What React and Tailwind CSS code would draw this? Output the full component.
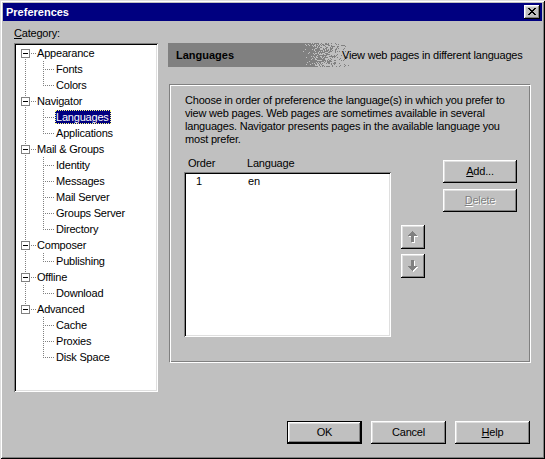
import React from "react";

const BTN =
  "shadow-[inset_-1px_-1px_0_#000,inset_1px_1px_0_#fff,inset_-2px_-2px_0_#808080,inset_2px_2px_0_#dfdfdf]";
const SUNKEN =
  "shadow-[inset_1px_1px_0_#808080,inset_-1px_-1px_0_#fff,inset_2px_2px_0_#000,inset_-2px_-2px_0_#dfdfdf]";

const tree = [
  { label: "Appearance", children: ["Fonts", "Colors"] },
  { label: "Navigator", children: ["Languages", "Applications"] },
  {
    label: "Mail & Groups",
    children: ["Identity", "Messages", "Mail Server", "Groups Server", "Directory"],
  },
  { label: "Composer", children: ["Publishing"] },
  { label: "Offline", children: ["Download"] },
  { label: "Advanced", children: ["Cache", "Proxies", "Disk Space"] },
];

function makeDither(w, h) {
  let seed = 987654;
  const rnd = () => {
    seed = (seed * 1103515245 + 12345) & 0x7fffffff;
    return seed / 0x7fffffff;
  };
  let d = "";
  for (let y = 0; y < h; y++) {
    for (let x = 0; x < w; x++) {
      const t = (x + 0.5) / w;
      if (rnd() > t) d += `M${x} ${y}h1v1h-1z`;
    }
  }
  return d;
}
const DITHER = makeDither(47, 24);

function rowsPath(rows, ox, oy) {
  let d = "";
  rows.forEach(([a, b], y) => {
    d += `M${a + ox} ${y + oy}h${b - a + 1}v1h-${b - a + 1}z`;
  });
  return d;
}
const UP_ROWS = [
  [4, 4],
  [3, 5],
  [2, 6],
  [1, 7],
  [0, 8],
  [3, 5],
  [3, 5],
  [3, 5],
  [3, 5],
  [3, 5],
  [3, 5],
];
const DOWN_ROWS = [...UP_ROWS].reverse();

const X_ROWS = [
  [0, 1, 6, 7],
  [1, 2, 5, 6],
  [2, 5],
  [3, 4],
  [2, 5],
  [1, 2, 5, 6],
  [0, 1, 6, 7],
];
function xPath(ox, oy) {
  let d = "";
  X_ROWS.forEach((r, y) => {
    for (let i = 0; i < r.length; i += 2) {
      const a = r[i],
        b = r[i + 1];
      d += `M${a + ox} ${y + oy}h${b - a + 1}v1h-${b - a + 1}z`;
    }
  });
  return d;
}

function Dots({ x1, y1, x2, y2 }) {
  return (
    <line
      x1={x1}
      y1={y1}
      x2={x2}
      y2={y2}
      stroke="#808080"
      strokeWidth="1"
      strokeDasharray="1 1"
    />
  );
}

function RootRow({ label, first, last }) {
  return (
    <div className="flex h-[16px] items-center">
      <svg width="20" height="16" className="shrink-0" shapeRendering="crispEdges">
        {!first && <Dots x1="9.5" y1="0" x2="9.5" y2="4" />}
        {!last && <Dots x1="9.5" y1="14" x2="9.5" y2="16" />}
        <rect x="5.5" y="4.5" width="8" height="8" fill="#fff" stroke="#808080" />
        <line x1="7" y1="8.5" x2="12" y2="8.5" stroke="#000" />
        <Dots x1="15" y1="8.5" x2="20" y2="8.5" />
      </svg>
      <span className="border border-transparent leading-[12px] whitespace-nowrap">
        {label}
      </span>
    </div>
  );
}

function ChildRow({ label, parentLast, lastChild, selected }) {
  return (
    <div className="flex h-[16px] items-center">
      <svg width="39" height="16" className="shrink-0" shapeRendering="crispEdges">
        {!parentLast && <Dots x1="9.5" y1="0" x2="9.5" y2="16" />}
        <Dots x1="27.5" y1="0" x2="27.5" y2={lastChild ? "9" : "16"} />
        <Dots x1="29" y1="8.5" x2="38" y2="8.5" />
      </svg>
      <span
        className={
          selected
            ? "border border-dotted border-[#ffff80] bg-[#000080] text-white pr-[1px] leading-[12px] whitespace-nowrap"
            : "border border-transparent pr-[1px] leading-[12px] whitespace-nowrap"
        }
      >
        {label}
      </span>
    </div>
  );
}

function Button({ children, className = "", isDefault = false, disabled = false }) {
  return (
    <div
      className={`flex items-center justify-center bg-[#c0c0c0] ${BTN} ${
        isDefault ? "border border-black" : ""
      } ${
        disabled ? "text-[#808080] [text-shadow:1px_1px_0_#fff]" : "text-black"
      } ${className}`}
    >
      {children}
    </div>
  );
}

function Arrow({ rows }) {
  return (
    <svg width="10" height="12" shapeRendering="crispEdges">
      <path d={rowsPath(rows, 1, 1)} fill="#fff" />
      <path d={rowsPath(rows, 0, 0)} fill="#808080" />
    </svg>
  );
}

export default function App() {
  return (
    <div
      className="w-[545px] h-[459px] bg-[#c0c0c0] p-[3px] flex flex-col font-['Liberation_Sans',Arial,sans-serif] text-[11px] tracking-[-0.2px] text-black shadow-[inset_1px_1px_0_#dfdfdf,inset_-1px_-1px_0_#000,inset_2px_2px_0_#fff,inset_-2px_-2px_0_#808080] overflow-hidden"
    >
      {/* Title bar */}
      <div className="h-[18px] shrink-0 bg-[#000080] flex items-center justify-between pl-[3px] pr-[2px]">
        <span className="font-bold text-white text-[11px] tracking-normal leading-none">
          Preferences
        </span>
        <div className={`w-[16px] h-[14px] bg-[#c0c0c0] ${BTN} flex`}>
          <svg width="16" height="14" shapeRendering="crispEdges">
            <path d={xPath(4, 3)} fill="#000" />
          </svg>
        </div>
      </div>

      {/* Body */}
      <div className="flex pl-[11px] pt-[6px]">
        <div className="flex flex-col w-[144px] shrink-0">
          <div className="h-[13px] leading-[13px] mb-[3px]">
            <u>C</u>ategory:
          </div>
          <div className={`h-[349px] bg-white ${SUNKEN} pt-[2px] pl-[2px]`}>
            {tree.map((node, i) => {
              const first = i === 0;
              const last = i === tree.length - 1;
              return (
                <div key={node.label}>
                  <RootRow label={node.label} first={first} last={last} />
                  {node.children.map((c, j) => (
                    <ChildRow
                      key={c}
                      label={c}
                      parentLast={last}
                      lastChild={j === node.children.length - 1}
                      selected={c === "Languages"}
                    />
                  ))}
                </div>
              );
            })}
          </div>
        </div>

        <div className="ml-[10px] mt-[16px] w-[363px] flex flex-col">
          {/* Header */}
          <div className="h-[24px] flex items-stretch">
            <div className="w-[135px] shrink-0 bg-[#808080] pl-[8px] flex items-center font-bold text-[11px] tracking-[0px]">
              Languages
            </div>
            <svg width="47" height="24" className="shrink-0" shapeRendering="crispEdges">
              <path d={DITHER} fill="#808080" />
            </svg>
            <div className="ml-[-8px] flex items-center whitespace-nowrap">
              View web pages in different languages
            </div>
          </div>

          {/* Group box */}
          <div className="mt-[17px] ml-[1px] h-[279px] border border-t-[#808080] border-l-[#808080] border-b-white border-r-white shadow-[inset_1px_1px_0_#fff,inset_-1px_-1px_0_#808080] pl-[15px] pt-[9px]">
            <p className="leading-[13px] whitespace-nowrap">
              Choose in order of preference the language(s) in which you prefer to
              <br />
              view web pages. Web pages are sometimes available in several
              <br />
              languages. Navigator presents pages in the available language you
              <br />
              most prefer.
            </p>

            <div className="flex mt-[11px]">
              <div className="w-[207px] -ml-[1px] shrink-0 flex flex-col">
                <div className="h-[13px] leading-[13px] flex">
                  <span className="w-[63px] pl-[4px]">Order</span>
                  <span>Language</span>
                </div>
                <div className={`mt-[2px] h-[165px] bg-white ${SUNKEN} pt-[3px] pl-[2px]`}>
                  <div className="h-[13px] leading-[13px] flex">
                    <span className="w-[62px] pl-[10px]">1</span>
                    <span>en</span>
                  </div>
                </div>
              </div>

              <div className="ml-[10px] pt-[68px] flex flex-col gap-[5px]">
                <Button className="w-[24px] h-[24px]">
                  <Arrow rows={UP_ROWS} />
                </Button>
                <Button className="w-[24px] h-[24px]">
                  <Arrow rows={DOWN_ROWS} />
                </Button>
              </div>

              <div className="ml-[18px] pt-[3px] flex flex-col gap-[6px]">
                <Button className="w-[74px] h-[23px]">
                  <span>
                    <u>A</u>dd...
                  </span>
                </Button>
                <Button className="w-[74px] h-[23px]" disabled>
                  <span>
                    <u>D</u>elete
                  </span>
                </Button>
              </div>
            </div>
          </div>
        </div>
      </div>

      {/* Bottom buttons */}
      <div className="flex justify-end gap-[9px] pr-[12px] mt-[29px]">
        <Button className="w-[75px] h-[23px]" isDefault>
          OK
        </Button>
        <Button className="w-[75px] h-[23px]">Cancel</Button>
        <Button className="w-[75px] h-[23px]">
          <span>
            <u>H</u>elp
          </span>
        </Button>
      </div>
    </div>
  );
}
